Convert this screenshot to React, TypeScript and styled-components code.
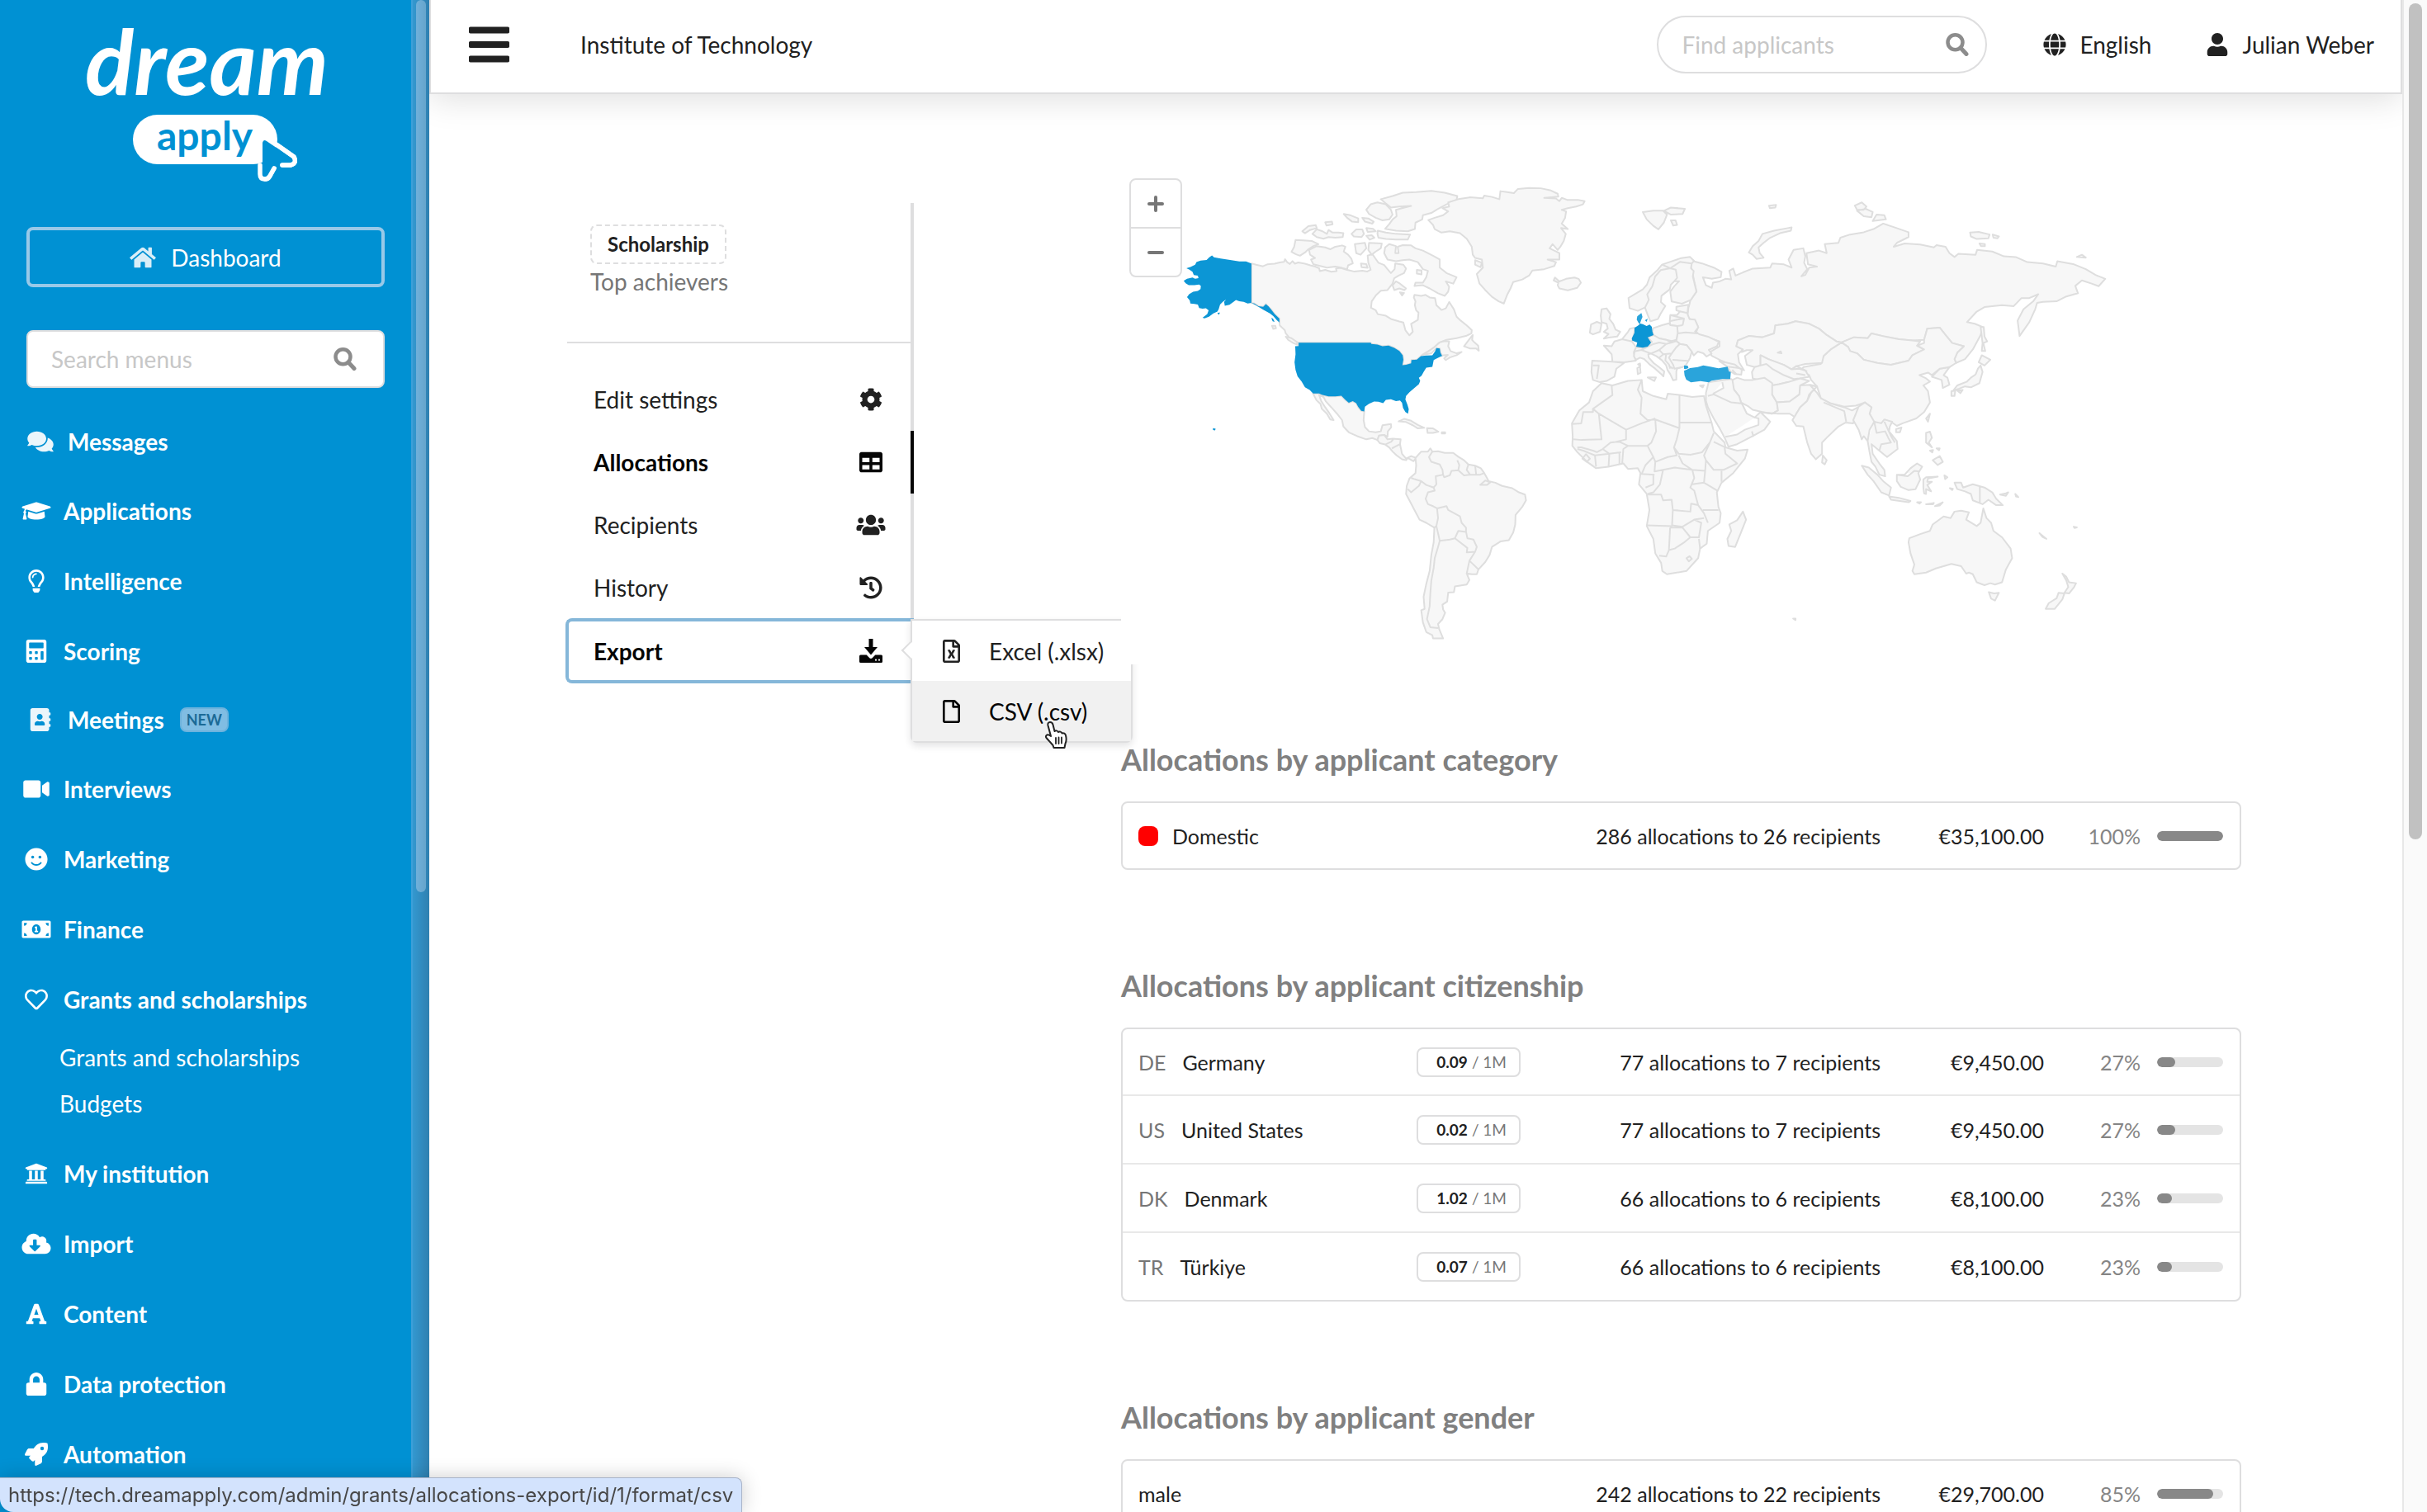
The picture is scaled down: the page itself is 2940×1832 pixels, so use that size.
import React from "react";
import styled, { createGlobalStyle, css } from "styled-components";
import {
  FaHome, FaComments, FaGraduationCap, FaRegLightbulb, FaCalculator, FaAddressBook,
  FaVideo, FaSmile, FaMoneyBillAlt, FaRegHeart, FaUniversity, FaCloudDownloadAlt, FaFont, FaLock,
  FaRocket, FaBars, FaGlobe, FaUser, FaCog, FaTable, FaUsers, FaHistory, FaRegFileExcel, FaRegFile,
} from "react-icons/fa";

const line = "#dededf";
const blue = "#0091d3";
const ink = "#212121";

const GlobalStyle = createGlobalStyle`
  *, *::before, *::after { box-sizing: border-box; }
  body { margin: 0; background: #fff; }
  body, button, input, table { font-family: Lato, "Liberation Sans", sans-serif; font-size: 28px; color: ${ink}; }
  a { color: inherit; text-decoration: none; }
  button { background: none; border: 0; padding: 0; cursor: pointer; }
  ul { list-style: none; margin: 0; padding: 0; }
`;

const Page = styled.div`
  display: grid;
  grid-template-columns: 520px minmax(0, 1fr) 30px;
  height: 100vh;
  overflow: hidden;
`;

/* ---------- sidebar ---------- */

const Sidebar = styled.aside`
  display: grid;
  grid-template-columns: minmax(0, 1fr) 22px;
  background: ${blue};
  color: #fff;
  min-height: 0;
  overflow: hidden;
`;

const SidebarBody = styled.div`
  min-height: 0;
  overflow: hidden;
`;

const SidebarTrack = styled.div`
  border-left: 2px solid #3d9fd8;
  padding: 0 4px;
  background: linear-gradient(90deg, #3398d0, #2f80b0);
`;

const SidebarThumb = styled.div`
  height: 59%;
  border-radius: 8px;
  background: linear-gradient(90deg, #70b0da, #66a5cc);
`;

const Logo = styled.a`
  display: block;
  height: 275px;
  svg { display: block; }
`;

const Dashboard = styled.a`
  display: flex;
  align-items: center;
  justify-content: center;
  gap: 18px;
  height: 73px;
  margin: 0 32px 52px;
  border: 4px solid #99c9e8;
  border-radius: 8px;
  svg { width: 32px; height: 28px; opacity: 0.85; }
`;

const SearchField = styled.label<{ $round?: boolean }>`
  display: flex;
  align-items: center;
  height: 70px;
  padding: 0 ${(p) => (p.$round ? "20px" : "32px")} 0 28px;
  border: 2px solid ${line};
  border-radius: ${(p) => (p.$round ? "35px" : "8px")};
  background: #fff;
  color: #8c8c8c;
  input {
    flex: 1;
    min-width: 0;
    border: 0;
    padding: 0;
    outline: 0;
    background: transparent;
  }
  input::placeholder { color: #c7c7c7; opacity: 1; }
  svg { width: 28px; height: 28px; }
`;

const SidebarSearch = styled.div`
  margin: 0 32px 24px;
`;

const NavLink = styled.a<{ $compact?: boolean }>`
  display: flex;
  align-items: center;
  height: ${(p) => (p.$compact ? "82px" : "85px")};
  padding-left: ${(p) => (p.$compact ? "31px" : "26px")};
  font-weight: 700;
`;

const NavIcon = styled.span<{ $soft?: boolean }>`
  display: flex;
  margin-right: 15px;
  opacity: ${(p) => (p.$soft ? 0.92 : 1)};
  svg { width: 36px; height: 28px; }
`;

const NewBadge = styled.span`
  margin-left: 19px;
  padding: 0 6px;
  border: 2px solid #6db3dd;
  border-radius: 8px;
  background: #80bde3;
  color: #1b6a96;
  font-size: 18px;
  line-height: 26px;
`;

const SubNav = styled.ul`
  margin-bottom: 14px;
`;

const SubLink = styled.a`
  display: block;
  padding-left: 72px;
  line-height: 56px;
`;

/* ---------- top bar ---------- */

const Main = styled.div`
  min-width: 0;
  min-height: 0;
  overflow: hidden;
`;

const TopBar = styled.header`
  display: flex;
  align-items: center;
  height: 114px;
  padding: 0 32px 4px 46px;
  border: solid ${line};
  border-width: 0 2px 2px;
  background: #fff;
  box-shadow: 0 6px 40px rgba(0, 0, 0, 0.13);
`;

const MenuButton = styled.button`
  display: flex;
  margin-right: 86px;
  svg { width: 49px; height: 56px; }
`;

const Institution = styled.span`
  flex: 1;
`;

const ApplicantSearch = styled.div`
  width: 400px;
  margin-right: 68px;
`;

const TopButton = styled.button`
  display: flex;
  align-items: center;
  gap: 16px;
  svg { width: 28px; height: 28px; }
  & + & { margin-left: 66px; }
`;

/* ---------- content ---------- */

const Content = styled.div`
  display: flex;
  align-items: flex-start;
  gap: 251px;
  padding: 76px 195px 0 167px;
`;

const SideMenu = styled.nav`
  position: relative;
  z-index: 1;
  flex: none;
  width: 420px;
  margin-top: 56px;
`;

const Intro = styled.div`
  border-right: 4px solid ${line};
  padding-bottom: 30px;
`;

const IntroText = styled.div`
  padding: 26px 28px 52px;
  border-bottom: 2px solid ${line};
`;

const TypeLabel = styled.span`
  display: inline-block;
  padding: 0 19px;
  border: 2px dashed ${line};
  border-radius: 8px;
  font-size: 24px;
  font-weight: 700;
  line-height: 44px;
  vertical-align: top;
`;

const GrantName = styled.div`
  color: #767676;
  line-height: 42px;
`;

const SideLink = styled.a<{ $active?: boolean }>`
  display: flex;
  align-items: center;
  justify-content: space-between;
  height: 76px;
  padding: 0 30px 0 32px;
  border-right: 4px solid ${(p) => (p.$active ? "#050505" : line)};
  color: ${(p) => (p.$active ? "#050505" : ink)};
  font-weight: ${(p) => (p.$active ? 700 : 400)};
`;

const SideIcon = styled.span`
  display: flex;
  svg { width: 36px; height: 28px; }
`;

const ExportItem = styled.div`
  position: relative;
  margin: -1px 0 0 -2px;
`;

const ExportButton = styled.button`
  display: flex;
  align-items: center;
  justify-content: space-between;
  width: 100%;
  height: 79px;
  padding: 0 34px 0 30px;
  border: 4px solid #85b7d9;
  border-right: 0;
  border-radius: 8px 0 0 8px;
  color: #050505;
  font-weight: 700;
  ${SideIcon} svg { height: 30px; }
`;

const Flyout = styled.ul`
  position: absolute;
  top: 1px;
  left: 418px;
  width: 269px;
  border: 2px solid ${line};
  border-radius: 0 0 8px 8px;
  background: #fff;
  box-shadow: 0 4px 8px rgba(34, 36, 38, 0.12);
  &::before {
    content: "";
    position: absolute;
    top: 28px;
    left: -10px;
    width: 16px;
    height: 16px;
    border: solid ${line};
    border-width: 0 0 2px 2px;
    background: #fff;
    transform: rotate(45deg);
  }
`;

const FlyoutLink = styled.a<{ $hover?: boolean }>`
  position: relative;
  display: flex;
  align-items: center;
  gap: 35px;
  height: 73px;
  padding-left: 37px;
  ${(p) => p.$hover && css`background: #f1f1f1; color: #050505;`}
  > svg:first-child { width: 21px; height: 28px; }
`;

const Pointer = styled.svg`
  position: absolute;
  left: 157px;
  top: 48px;
`;

const Results = styled.main`
  position: relative;
  flex: 1;
  min-width: 0;
`;

const MapPanel = styled.div`
  position: relative;
  z-index: 2;
  margin-bottom: 93px;
  background: #fff;
  > svg { display: block; width: 100%; }
`;

const ZoomControl = styled.div`
  position: absolute;
  top: 26px;
  left: 10px;
  border: 2px solid ${line};
  border-radius: 8px;
  background: #fff;
`;

const ZoomButton = styled.button`
  display: flex;
  align-items: center;
  justify-content: center;
  width: 60px;
  height: 57px;
  & + & { border-top: 2px solid ${line}; height: 59px; }
`;

const Section = styled.section`
  margin-bottom: 118px;
`;

const Heading = styled.h2`
  margin: 0 0 29px;
  color: #808080;
  font-size: 36px;
  line-height: 44px;
`;

const Table = styled.table`
  width: 100%;
  table-layout: fixed;
  border: 2px solid ${line};
  border-radius: 8px;
  border-collapse: separate;
  border-spacing: 0;
  font-size: 25px;
  td { height: 79px; padding: 0; white-space: nowrap; }
  tr + tr td { border-top: 2px solid #e8e8e8; height: 83px; }
`;

const NameCol = styled.col``;
const RatioCol = styled.col`width: 160px;`;
const TextCol = styled.col`width: 402px;`;
const AmountCol = styled.col`width: 198px;`;
const ShareCol = styled.col`width: 237px;`;

const Cell = styled.div<{ $end?: boolean; $pad?: string }>`
  display: flex;
  align-items: center;
  justify-content: ${(p) => (p.$end ? "flex-end" : "flex-start")};
  gap: 20px;
  padding: ${(p) => p.$pad || "0"};
`;

const Code = styled.span`
  color: #767676;
`;

const Swatch = styled.span`
  width: 24px;
  height: 24px;
  margin-right: -3px;
  border-radius: 8px;
  background: #f00;
`;

const Ratio = styled.span`
  display: inline-flex;
  align-items: center;
  justify-content: flex-end;
  gap: 5px;
  width: 126px;
  height: 36px;
  padding-right: 15px;
  border: 2px solid ${line};
  border-radius: 8px;
  color: #767676;
  font-size: 19px;
  vertical-align: middle;
  b { color: ${ink}; }
`;

const Percent = styled.span`
  color: #858585;
`;

const Bar = styled.span`
  width: 80px;
  height: 12px;
  border-radius: 6px;
  background: #e4e4e4;
  overflow: hidden;
`;

const BarFill = styled.span`
  display: block;
  height: 100%;
  border-radius: 6px;
  background: #888;
`;

const PageTrack = styled.div`
  border-left: 2px solid #e8e8e8;
  padding: 4px 6px;
  background: #fafafa;
`;

const PageThumb = styled.div`
  width: 16px;
  height: 1013px;
  max-height: 100%;
  border-radius: 8px;
  background: #c1c1c1;
`;

const StatusBar = styled.div`
  position: fixed;
  left: 0;
  bottom: 0;
  z-index: 5;
  padding: 0 10px;
  border: solid #a9b4c8;
  border-width: 1px 1px 0 0;
  border-radius: 0 8px 0 16px;
  background: #d3e3fd;
  color: #474747;
  font-family: Inter, sans-serif;
  font-size: 24px;
  line-height: 41px;
  box-shadow: 0 0 24px rgba(0, 0, 0, 0.2);
`;

/* ---------- data ---------- */

type NavEntry = { label: string; icon: React.ReactNode; compact?: boolean; badge?: string; children?: string[] };

const nav: NavEntry[] = [
  { label: "Messages", icon: <FaComments />, compact: true },
  { label: "Applications", icon: <FaGraduationCap /> },
  { label: "Intelligence", icon: <FaRegLightbulb /> },
  { label: "Scoring", icon: <FaCalculator /> },
  { label: "Meetings", icon: <FaAddressBook />, compact: true, badge: "NEW" },
  { label: "Interviews", icon: <FaVideo /> },
  { label: "Marketing", icon: <FaSmile /> },
  { label: "Finance", icon: <FaMoneyBillAlt /> },
  { label: "Grants and scholarships", icon: <FaRegHeart />, children: ["Grants and scholarships", "Budgets"] },
  { label: "My institution", icon: <FaUniversity /> },
  { label: "Import", icon: <FaCloudDownloadAlt /> },
  { label: "Content", icon: <FaFont /> },
  { label: "Data protection", icon: <FaLock /> },
  { label: "Automation", icon: <FaRocket /> },
];

type Row = { code?: string; swatch?: boolean; name: string; ratio?: string; text: string; amount: string; share: number };

const sections: { title: string; rows: Row[] }[] = [
  {
    title: "Allocations by applicant category",
    rows: [{ swatch: true, name: "Domestic", text: "286 allocations to 26 recipients", amount: "€35,100.00", share: 100 }],
  },
  {
    title: "Allocations by applicant citizenship",
    rows: [
      { code: "DE", name: "Germany", ratio: "0.09", text: "77 allocations to 7 recipients", amount: "€9,450.00", share: 27 },
      { code: "US", name: "United States", ratio: "0.02", text: "77 allocations to 7 recipients", amount: "€9,450.00", share: 27 },
      { code: "DK", name: "Denmark", ratio: "1.02", text: "66 allocations to 6 recipients", amount: "€8,100.00", share: 23 },
      { code: "TR", name: "Türkiye", ratio: "0.07", text: "66 allocations to 6 recipients", amount: "€8,100.00", share: 23 },
    ],
  },
  {
    title: "Allocations by applicant gender",
    rows: [{ name: "male", text: "242 allocations to 22 recipients", amount: "€29,700.00", share: 85 }],
  },
];

/* ---------- drawings ---------- */

const LogoMark = () => (
  <svg width="498" height="230" viewBox="0 0 498 230" role="img" aria-label="dream apply">
    <text x="103" y="115" fill="#fff" fontFamily="Lato, sans-serif" fontSize="110" fontWeight="700" fontStyle="italic">dream</text>
    <rect x="161" y="139" width="175" height="60" rx="30" fill="#fff" />
    <path d="M315 200 L315 211 Q315 217 321 217 Q325 217 327 213 L332 204 M342 200 L352 200 Q360 198 356 190 L322 166" fill="none" stroke="#fff" strokeWidth="5.5" strokeLinecap="round" strokeLinejoin="round" />
    <path d="M318 212 V173 Q319 168 323 171 L354 192 Q357 196 352 197.500 L340 197.500 Q336 198 334 201 L325 213 Q320 216 318 212Z" fill={blue} />
    <path d="M332 204 L327 213 Q325 217 321 217" fill="none" stroke="#fff" strokeWidth="5.5" strokeLinecap="round" />
    <path d="M342 200 L352 200 Q360 198 356 190 L336 176" fill="none" stroke="#fff" strokeWidth="5.5" strokeLinecap="round" strokeLinejoin="round" />
    <text x="190" y="182" fill={blue} fontFamily="Lato, sans-serif" fontSize="48" fontWeight="700">apply</text>
  </svg>
);

const SearchIcon = () => (
  <svg viewBox="0 0 28 28" fill="none" stroke="currentColor" aria-hidden="true">
    <circle cx="11.500" cy="11.300" r="9" strokeWidth="4.500" />
    <path d="M18 18l7 7.500" strokeWidth="5" strokeLinecap="round" />
  </svg>
);

const DownloadIcon = () => (
  <svg viewBox="0 0 28 30" fill="currentColor">
    <path d="M11.500 0h5v10h5.500L14 19.500 6 10h5.500z" />
    <path d="M1.500 19.500h7.200l3.600 3.800q1.700 1.500 3.400 0l3.600-3.800h7.200q1.500 0 1.500 1.500v6.500q0 1.500-1.500 1.500h-25q-1.500 0-1.500-1.500V21q0-1.500 1.500-1.500z" />
    <circle cx="20" cy="25.700" r="1.100" fill="#fff" />
    <circle cx="24" cy="25.700" r="1.100" fill="#fff" />
  </svg>
);

const americas = [
  // Canada and the Arctic islands
  "M431,332 445,336 465,341 478,335 500,333 515,329 528,327 531,319 537,328 545,334 553,325 560,333 570,329 590,333 606,338 620,342 632,347 634,356 650,352 668,358 684,356 682,348 695,346 715,352 735,357 760,355 775,357 785,352 782,342 778,330 776,308 790,303 800,318 808,330 825,337 835,350 845,362 856,350 858,332 882,336 890,348 884,362 868,370 855,378 850,395 835,415 815,417 800,432 788,450 786,470 800,478 806,490 830,495 845,505 870,513 882,516 888,540 900,556 910,545 905,520 925,508 927,485 920,478 916,462 918,450 913,438 915,430 935,433 948,430 960,438 976,440 980,462 995,477 1008,472 1018,452 1032,475 1040,498 1052,510 1070,525 1085,540 1084,550 1070,557 1040,565 1010,570 990,578 975,592 960,603 940,615 934,621 922,632 906,633 905,643 890,648 879,649 882,632 880,618 870,605 855,595 838,588 820,590 805,585 787,583 785,579 571,579 560,575 545,565 533,550 530,540 515,525 514,504 500,490 490,476 474,459 466,467 452,465 440,457 431,455Z",
  "M990,578 1005,574 1018,575 1015,590 1022,605 1040,612 1055,608 1040,618 1020,625 1008,633 1003,628 1014,617 1000,618 997,620 992,610 990,597 980,596 965,612 940,617 962,602 975,592Z",
  "M1088,555 1080,565 1062,590 1080,597 1098,597 1106,604 1104,588 1090,575 1086,570Z",
  "M533,560 550,565 565,576 570,586 555,580 540,570Z M492,526 l10,0 2,8 -8,2z",
  "M562,259 585,260 610,262 630,272 615,278 600,288 590,298 575,308 562,303 550,296 558,280Z",
  "M602,290 625,278 650,282 665,288 680,280 700,276 710,280 705,295 718,305 728,318 732,332 718,338 715,350 700,346 680,342 655,345 635,340 615,335 608,320 620,315 605,305Z",
  "M582,232 600,216 622,213 625,222 605,228 590,238Z",
  "M612,240 625,226 642,232 655,240 660,228 672,236 690,236 704,238 702,250 680,252 660,250 645,255 625,250Z",
  "M650,204 l20,-2 2,8 -18,4z M705,178 725,182 748,192 748,204 730,202 715,190Z M728,240 742,226 760,226 765,240 758,250 735,248Z M760,190 778,192 794,202 790,208 768,202Z",
  "M772,165 785,148 805,142 830,148 845,165 850,180 840,195 820,198 800,190 780,178Z",
  "M815,132 850,122 880,112 920,110 965,106 1005,112 1042,122 1040,135 1010,148 985,162 965,175 940,182 938,195 918,205 916,225 895,232 860,230 828,224 840,210 850,195 862,185 860,165 885,158 905,153 870,155 845,158 830,145Z",
  "M806,230 830,236 860,240 902,242 895,258 860,258 830,256 808,252 805,240Z M772,222 l20,2 8,8 -24,2z M772,246 l16,-2 8,8 -14,6z",
  "M738,272 768,268 772,285 755,305 742,300Z M780,268 818,270 815,285 800,295 788,305 778,290Z M756,332 l16,2 4,12 -18,-2z",
  "M825,300 828,282 840,272 860,278 858,300 868,300 865,280 880,275 905,276 918,285 940,292 970,308 990,320 990,345 1010,362 1040,375 1030,395 1008,388 1018,405 1015,420 1005,433 985,425 960,410 940,400 915,402 918,392 940,392 950,375 955,355 940,350 925,328 900,320 880,322 860,325 835,320Z",
  "M850,400 860,388 872,395 890,410 885,415 870,410 855,415Z M872,422 l12,2 -6,8z M922,352 l14,2 0,12 -14,-2z",
  // Greenland, Iceland
  "M956,197 975,190 1000,182 1015,170 998,160 1018,155 1015,142 1045,132 1080,126 1118,129 1122,121 1145,125 1167,132 1170,107 1190,110 1210,113 1222,100 1255,97 1290,98 1320,105 1340,115 1342,124 1300,128 1335,130 1345,138 1352,128 1368,134 1400,134 1420,138 1415,148 1395,155 1370,160 1352,165 1365,170 1362,190 1352,208 1370,225 1350,222 1364,240 1358,262 1348,280 1340,290 1325,272 1316,285 1345,300 1345,320 1310,320 1335,328 1330,340 1300,350 1265,354 1255,370 1235,382 1208,390 1200,410 1190,430 1180,457 1165,450 1145,436 1125,415 1108,395 1100,365 1118,345 1115,320 1095,315 1088,305 1085,280 1070,255 1050,238 1020,232 995,236 975,225 970,212Z",
  "M1095,322 l20,8 -4,14 -16,-8z",
  "M1328,385 1332,376 1345,388 1365,380 1390,376 1402,380 1409,392 1398,408 1370,416 1345,410 1340,400 1342,392Z",
  // Mexico, Central America, Caribbean
  "M614,737 632,737 640,741 660,746 680,746 698,744 710,757 720,766 732,761 742,767 748,779 757,791 766,793 764,820 768,842 780,855 800,858 815,855 820,836 845,832 846,842 836,855 835,872 825,866 810,868 805,882 790,876 772,880 745,870 720,858 704,840 700,820 685,800 668,780 652,762 645,748 632,742 638,760 650,780 662,798 675,820 665,818 655,800 640,785 636,770 624,758Z",
  "M805,882 810,868 825,866 835,880 850,878 874,880 872,895 875,910 878,925 890,940 905,932 920,938 912,948 895,938 890,945 878,942 862,930 850,918 840,905 828,896 812,892Z M828,896 845,888 852,880 M848,908 872,895",
  "M868,824 885,816 905,822 925,835 944,844 925,846 910,836 890,826Z M952,845 970,846 986,856 970,860 954,860Z M996,858 h10 v4 h-10z",
  // South America
  "M918,938 935,918 955,918 962,908 968,918 985,917 1005,922 1030,922 1045,934 1062,945 1075,958 1095,962 1112,970 1122,985 1130,1000 1135,1010 1155,1015 1175,1025 1205,1032 1225,1045 1243,1052 1246,1070 1235,1090 1215,1115 1214,1145 1208,1170 1195,1194 1170,1198 1145,1215 1138,1240 1125,1262 1105,1285 1100,1300 1085,1300 1070,1298 1078,1318 1070,1332 1035,1338 1032,1356 1015,1357 1012,1385 998,1395 1000,1410 1006,1420 998,1440 985,1455 988,1470 1000,1500 970,1500 968,1490 950,1480 940,1450 935,1412 945,1408 942,1370 950,1330 960,1290 965,1240 972,1200 974,1155 950,1140 930,1130 915,1100 900,1070 890,1050 892,1025 900,1002 918,985 920,960Z",
];

const americasBorders =
  "M974,1155 980,1150 990,1196 985,1215 975,1250 972,1280 965,1320 962,1360 960,1400 952,1440 962,1465 985,1468 M905,1000 915,1004 935,1010 928,1025 905,1045 895,1035 M935,1010 950,1022 972,1030 975,1040 955,1045 948,1065 955,1082 970,1088 982,1095 985,1125 980,1150 M968,918 958,935 965,950 990,958 998,975 1000,990 978,995 980,1020 972,1030 M1000,990 1003,998 1020,992 1025,978 1045,976 1048,960 1042,945 M1045,976 1062,992 1080,990 1110,990 1122,985 M1075,958 1070,975 1080,990 M1095,962 1098,990 M1110,1022 1125,1008 1140,1014 1130,1022Z M982,1095 1010,1088 1015,1100 1050,1120 1055,1140 1068,1155 1068,1168 1045,1165 1035,1188 1020,1192 990,1196 M1068,1168 1072,1188 1090,1192 1100,1215 1095,1230 1070,1232 1072,1218 1035,1188 M1095,1230 1078,1258 1070,1298 M1078,1258 1105,1285";

const usa =
  "M314,307 320,313 340,317 368,321 395,326 415,326 431,332 431,455 420,457 408,452 395,450 385,446 378,452 366,461 352,464 350,452 356,444 346,452 338,460 334,474 330,482 318,488 305,498 292,503 286,501 300,490 304,478 296,472 286,473 276,471 272,460 262,458 250,457 248,447 240,437 246,428 258,420 272,418 280,412 281,402 276,398 262,400 245,400 236,394 230,386 240,380 256,376 264,380 274,378 272,370 260,368 256,358 246,351 238,347 250,343 264,336 268,328 280,323 298,321 306,313Z M431,455 440,457 452,465 466,467 474,459 482,466 490,476 500,490 514,504 514,516 506,508 496,496 486,488 476,482 466,476 456,470 444,462Z M490,502 l5,2 5,10 -6,-2z M330,486 l8,-1 -4,7z M317,845 l8,2 -2,5 -6,-1z M571,579 785,579 787,583 805,585 820,590 838,588 855,595 870,605 880,618 882,632 879,649 890,648 905,643 906,633 922,632 934,621 950,619 968,618 976,606 980,596 990,597 992,610 997,620 985,626 972,633 970,644 968,654 950,657 942,670 936,682 928,688 932,698 928,708 915,720 900,733 890,745 888,756 894,772 898,786 896,800 888,795 881,782 878,766 872,759 860,761 845,755 830,757 822,767 808,763 795,762 780,769 768,778 766,793 757,791 748,779 742,767 732,761 720,766 710,757 698,744 680,746 660,746 640,741 632,737 614,737 604,726 590,718 580,700 568,684 562,664 559,640 562,615 561,590 571,589Z";

const oldWorld = [
  // Arctic islands
  "M318,172 345,168 370,168 380,180 372,205 358,226 345,215 328,195Z M372,168 390,158 426,162 420,178 390,180Z M390,198 l12,0 4,14 -10,2z M642,152 l18,-2 -2,8 -14,2z",
  "M590,298 600,278 615,262 625,240 655,230 690,222 700,220 698,230 670,238 645,252 628,268 615,282 618,300 628,314 610,318 600,305Z",
  "M862,152 880,142 892,155 885,165 868,165Z M868,168 890,162 908,172 905,188 885,185Z M908,200 918,180 938,182 942,195Z M1158,236 1180,234 1208,242 1205,254 1175,256 1160,248Z M1216,242 l16,6 -4,6 -10,-2z M1182,270 l14,2 0,6 -10,0z M1432,312 1445,305 1455,314Z",
  // British Isles
  "M212,475 225,472 235,490 232,505 242,520 248,538 260,545 252,560 235,562 218,566 230,552 218,545 228,535 225,520 212,515 210,495Z M182,548 185,522 200,514 212,520 208,545 190,553Z",
  // Russia
  "M448,325 470,332 500,345 520,358 518,375 495,380 472,375 480,400 495,408 498,392 515,388 530,380 545,382 540,355 550,348 556,370 575,360 600,348 645,345 650,332 680,335 700,345 692,320 705,290 730,285 735,310 732,330 740,350 725,372 735,368 745,345 765,342 742,335 738,300 770,292 790,300 785,272 820,268 825,252 850,242 885,235 910,225 935,208 965,220 1000,235 1000,250 970,268 962,280 990,270 1030,273 1065,282 1072,275 1095,280 1105,300 1118,312 1128,302 1172,305 1176,290 1215,295 1245,310 1275,312 1305,328 1345,332 1378,342 1382,325 1425,335 1455,350 1480,368 1505,380 1488,403 1470,395 1445,385 1428,402 1435,425 1405,435 1380,450 1345,452 1330,455 1325,475 1310,515 1285,558 1280,510 1295,475 1320,450 1333,428 1310,440 1290,440 1270,465 1240,462 1195,468 1175,482 1150,515 1170,520 1190,530 1185,555 1165,600 1145,630 1122,642 1118,630 1125,610 1142,590 1112,580 1095,555 1080,532 1048,535 1040,570 1010,572 975,568 940,560 905,550 895,565 860,562 828,578 815,575 790,555 770,535 745,520 710,512 690,520 658,525 655,550 625,562 590,558 562,572 558,590 575,600 562,615 565,640 578,665 560,655 548,650 520,635 495,620 490,608 515,590 515,575 490,565 465,560 455,545 460,530 452,510 432,502 435,470 438,458 440,445 456,420 450,388 445,358 440,335Z",
  "M1185,530 1193,530 1195,560 1202,575 1192,580 1197,605 1188,605 1190,580Z",
  // Japan and Korea
  "M1180,640 1188,618 1210,632 1195,650Z M1185,650 1190,670 1182,705 1160,718 1145,715 1130,722 1115,728 1125,712 1150,700 1160,688 1172,678 1178,660Z M1110,730 1120,728 1118,745 1110,745Z M1125,728 l14,-2 -6,10z",
  "M1060,685 1080,660 1105,655 1090,680 1100,688 1105,710 1088,720 1085,695Z",
  // Central and East Asia
  "M828,578 860,562 895,565 905,550 940,560 975,568 1010,572 1030,575 1022,588 1040,600 1010,618 1000,635 955,648 920,642 885,632 868,612 850,605 845,592Z",
  "M828,578 845,592 850,605 868,612 885,632 920,642 955,648 1000,635 1010,618 1040,600 1022,588 1040,580 1040,570 1048,535 1080,532 1095,555 1112,580 1142,590 1125,610 1118,630 1122,642 1105,655 1080,660 1060,680 1050,672 1028,680 1045,690 1055,700 1038,712 1050,730 1055,765 1040,795 1020,815 985,830 970,838 955,825 938,825 925,832 910,825 900,800 905,780 888,765 865,775 835,778 800,768 775,752 765,715 750,695 745,680 722,668 730,655 775,645 782,620 800,600Z",
  "M558,590 562,572 590,558 625,562 655,550 658,525 690,520 710,512 745,520 770,535 790,555 815,575 828,578 800,600 782,620 778,642 735,645 712,652 700,662 680,648 640,630 620,618 620,650 605,655 585,648 580,620 600,602 585,602 572,608 575,600Z M664,610 l8,-4 2,6z",
  "M605,655 620,650 635,645 650,660 680,680 705,692 712,700 690,702 668,708 650,712 630,700 600,690 598,670Z M620,650 620,618 640,630 680,648 700,662 712,652 735,665 745,685 722,690 705,692 680,680 650,660 635,645Z M700,662 720,660 740,668 M712,675 735,680",
  "M548,695 560,688 578,695 600,695 630,688 650,705 652,730 650,740 662,765 665,790 650,800 625,795 600,788 590,778 570,765 565,745 552,725 545,705Z",
  "M650,712 668,708 690,702 722,690 745,698 722,712 720,740 695,762 662,765 650,740Z",
  "M662,765 695,762 720,740 722,712 748,710 765,715 745,740 740,760 722,780 712,800 710,812 695,800 665,800 625,796 650,800 665,790Z",
  "M765,715 748,712 765,735 775,752 800,768 835,780 855,790 888,768 890,780 865,810 858,830 838,828 820,840 790,875 778,890 778,925 762,942 750,925 740,890 730,840 712,838 702,820 712,800 722,780 740,760 750,735Z M782,765 835,792 840,825",
  "M780,930 790,945 785,958 778,952Z",
  // South-east Asia
  "M888,765 905,780 900,800 912,825 930,830 938,818 958,825 952,840 950,855 970,885 972,910 945,935 930,920 905,895 908,925 925,955 938,975 940,995 925,990 915,965 905,950 900,920 895,885 885,870 880,880 872,850 858,820 865,800 872,778Z M912,825 900,850 895,885 M912,825 918,860 940,855 948,875 955,890 930,895 925,915 M938,825 955,870 965,890",
  "M968,848 982,843 978,858 968,858Z M1045,815 1055,800 1050,825Z M1045,860 1055,856 1060,875 1052,890 1060,905 1045,890Z M1062,945 1080,932 1088,950 1075,960Z M1055,915 l8,-2 -2,8z M1072,908 l8,0 -2,6z",
  "M880,962 898,968 920,990 935,1010 955,1030 950,1055 930,1045 910,1010 895,990Z M950,1058 975,1062 1005,1072 1000,1076 955,1068Z M970,990 990,990 1005,970 1022,955 1035,965 1025,985 1030,1005 1018,1035 1000,1038 980,1028 970,1010Z M970,990 998,995 1015,978 1028,980",
  "M1038,1005 1045,998 1075,996 1050,1002 1048,1012 1060,1012 1048,1022 1058,1042 1045,1035 1045,1050 1040,1048 1038,1030Z M1022,1076 l10,0 -4,4z M1045,1082 l20,-4 -2,4z M1068,1088 l20,-12 -8,10z M1092,992 l8,6 -6,6z M1106,1032 l8,2 -2,4z",
  "M1118,1015 1135,1015 1140,1030 1165,1020 1195,1030 1215,1045 1225,1065 1242,1085 1225,1085 1205,1068 1190,1082 1165,1070 1160,1050 1145,1042 1125,1035Z M1183,1028 1183,1080 M1235,1052 1250,1048 1256,1045 1250,1056Z M1274,1050 l8,10 -6,-2z",
  // Oceania
  "M1002,1188 1030,1175 1055,1165 1062,1145 1090,1120 1108,1125 1118,1105 1135,1102 1155,1107 1148,1130 1175,1150 1185,1140 1192,1095 1200,1125 1212,1140 1218,1165 1240,1185 1262,1220 1266,1250 1250,1285 1240,1325 1222,1332 1210,1328 1195,1334 1175,1325 1165,1300 1155,1295 1148,1298 1135,1275 1110,1268 1070,1282 1045,1295 1015,1300 1010,1290 1015,1270 1005,1235 1000,1200Z",
  "M1206,1356 1220,1360 1232,1358 1222,1382 1212,1376Z M1395,1298 1405,1308 1412,1325 1430,1328 1425,1340 1412,1360 1400,1358 1410,1340 1405,1320Z M1385,1358 1400,1360 1395,1378 1375,1408 1352,1408 1360,1390 1380,1375Z M1336,1172 1354,1190 1344,1184Z M1424,1152 l8,2 -6,2z M704,1438 l6,0 0,5z",
  // France, Iberia, Benelux
  "M240,638 238,615 218,588 238,590 245,575 265,568 290,575 302,595 295,610 300,635 270,640Z M188,635 240,638 270,642 250,660 245,685 225,698 208,702 190,695 186,670Z M190,650 205,650 200,692 M265,568 280,545 285,535 298,532 295,555 290,575Z",
  // Middle East
  "M487,702 545,692 548,695 552,725 565,745 570,765 575,775 585,800 605,812 620,795 645,825 630,850 600,870 560,895 538,903 530,880 515,845 500,815 485,780 480,760 480,735Z M485,745 500,740 545,765 570,768 M498,738 525,720 522,702 M530,872 560,865 580,850 615,835 615,815 605,812 M598,855 602,872",
  // Africa
  "M212,705 240,712 280,698 315,695 318,730 345,745 378,755 382,738 415,742 445,748 475,745 480,775 495,830 500,855 528,890 530,905 560,915 587,912 580,940 550,985 520,1015 508,1045 512,1090 518,1110 515,1140 485,1165 482,1205 465,1220 460,1250 430,1290 380,1300 368,1290 365,1265 350,1235 345,1190 328,1150 335,1100 328,1050 308,1020 312,985 305,970 280,972 268,955 230,965 198,970 175,950 150,920 137,900 138,870 136,830 155,790 180,765 190,730Z",
  "M575,1105 583,1130 570,1170 555,1215 538,1212 535,1190 545,1165 540,1145 560,1132Z",
];

const oldWorldBorders =
  "M136,832 160,830 165,795 190,795 190,785 240,742 238,712 M190,785 205,800 212,880 160,882 140,880 M205,800 275,850 315,830 350,815 M315,695 305,725 315,750 312,800 330,820 350,818 412,845 412,742 M412,828 495,828 M275,850 275,880 248,888 235,890 215,910 200,920 190,915 160,905 150,905 M350,818 352,855 340,890 330,900 280,900 258,888 248,888 M412,845 405,880 398,905 405,930 382,935 350,950 345,935 330,900 M398,905 410,925 440,928 470,920 490,890 500,860 M500,888 530,905 M490,890 475,930 480,945 500,975 525,975 560,955 530,925 528,905 M410,930 420,955 445,975 478,978 480,945 M350,950 348,980 370,975 400,968 445,975 M345,935 325,960 315,988 348,990 M265,955 268,910 280,900 M258,958 258,922 M230,965 232,925 262,920 M198,965 195,930 232,925 M215,910 232,925 M150,910 165,915 185,925 195,930 M163,940 172,926 182,940 174,950Z M370,975 362,1020 345,1045 330,1050 M345,990 345,1020 325,1030 M330,1052 365,1052 370,1070 392,1068 395,1100 440,1105 442,1080 460,1085 450,1040 440,1030 450,1000 445,975 M478,978 475,1015 510,1040 M520,978 520,1012 M475,1015 445,1020 M472,1100 512,1100 M460,1085 475,1110 485,1140 M395,1100 393,1148 420,1152 450,1130 475,1125 M328,1148 393,1150 M388,1155 385,1225 378,1245 360,1242 M388,1155 420,1155 440,1185 425,1200 400,1220 385,1225 M440,1185 462,1185 468,1140 450,1130 M462,1190 465,1220 M430,1250 438,1244 444,1252 436,1260Z";

const europe = [
  // Norway, Sweden and Finland
  "M38,183 60,170 90,152 105,135 115,108 145,80 160,62 195,50 230,38 262,34 276,48 268,58 265,75 275,85 272,105 285,160 265,190 232,204 195,196 190,160 205,140 222,122 205,122 192,135 188,152 158,175 156,198 172,212 155,240 145,260 118,268 108,245 98,218 72,230 42,220Z",
  // Baltic states, Belarus, Ukraine, Moldova
  "M212,215 256,208 252,240 260,260 280,262 292,290 280,305 295,315 330,325 366,342 360,358 330,372 340,385 322,396 310,384 290,378 275,392 268,378 250,355 225,350 212,340 217,310 215,285 190,282 188,268 190,245 215,245 225,232 212,228Z",
  // Poland
  "M128,293 160,282 185,275 190,282 215,285 217,310 212,335 195,340 175,335 150,330 129,318 125,305Z",
  // Alps, Italy, Balkans
  "M66,362 90,364 108,360 120,345 108,326 129,318 150,330 175,335 195,345 212,340 225,350 250,355 268,378 262,400 256,412 245,430 235,434 215,440 212,450 212,480 200,482 190,460 180,445 175,428 160,410 140,395 120,385 110,388 112,400 130,420 150,435 168,450 165,468 155,458 135,440 115,425 95,405 80,400 65,408 58,395 60,375Z",
  // Caucasus and Mediterranean islands
  "M368,412 425,425 450,445 448,462 425,460 408,450 398,433Z M400,433 440,438 M415,445 430,460",
  "M70,438 80,432 82,455 72,460Z M73,424 l7,-3 1,9z M108,472 138,472 132,485Z M298,502 l14,-2 -4,8z",
];

const europeBorders =
  "M98,218 112,190 106,170 125,140 135,105 155,82 190,75 210,80 215,110 205,122 M160,62 190,75 225,52 268,58 M190,245 240,258 M188,268 215,262 240,258 235,282 M225,232 252,238 M235,282 215,285 M217,312 245,308 290,312 M56,378 85,372 108,360 130,350 150,345 175,350 195,345 M108,326 125,345 M85,372 120,385 150,372 175,350 M150,372 165,388 195,385 212,362 225,350 M165,388 150,400 M175,388 172,410 185,425 190,440 M195,385 185,400 200,425 M198,408 255,412 M200,425 205,440 235,434 M185,430 200,440";

const germany =
  "M75,282 80,276 90,278 104,285 115,280 123,288 125,305 129,318 108,326 120,345 115,352 108,360 90,364 66,360 70,345 52,338 50,330 60,310 60,292Z";
const denmark = "M76,276 68,262 70,250 85,238 89,252 84,264 80,276Z M98,264 108,258 104,270Z";
const turkey =
  "M240,448 262,438 290,434 310,428 335,433 365,439 398,433 403,450 410,452 408,478 380,478 340,484 330,490 300,485 265,490 248,480 242,465Z M240,428 254,430 256,438 245,442 240,440Z";

const Land = styled.path`
  fill: #f7f7f7;
  stroke: #dedede;
  stroke-width: 2px;
  stroke-linejoin: round;
  vector-effect: non-scaling-stroke;
`;

const Border = styled(Land)`
  fill: none;
`;

const WorldMap = () => (
  <svg viewBox="1358 190 1357 615" role="img" aria-label="World map of allocations">
    <g transform="translate(1340 190) scale(0.40816 0.38903)">
      {americas.map((d) => <Land key={d} d={d} />)}
      <Border d={americasBorders} />
      <path d={usa} fill="#0c96d5" />
    </g>
    <g transform="translate(1840 190) scale(0.47194 0.38903)">
      {oldWorld.map((d) => <Land key={d} d={d} />)}
      <Border d={oldWorldBorders} />
    </g>
    <g transform="translate(1960 300) scale(0.33333)">
      {europe.map((d) => <Land key={d} d={d} />)}
      <Border d={europeBorders} />
      <path d={germany} fill="#0c96d5" />
      <path d={denmark} fill="#2aa4db" />
      <path d={turkey} fill="#2aa4db" />
    </g>
  </svg>
);

const HandPointer = () => (
  <Pointer width="34" height="36" viewBox="0 0 34 36" aria-hidden="true">
    <path d="M10 2c2 0 3 1 3.500 3l2 8c1-1 3.500-1 4.500 1 1.500-1 3.800-.5 4.500 1.500 2-.8 4 .5 4.500 2.500 1 4 1 7-.5 10l-1 5H14.500l-1-3-8-9c-1.500-2 .5-4.500 3-3.500l2.500 1.500L7.500 6C7 3.500 8 2 10 2z" fill="#fff" stroke="#222" strokeWidth="2" strokeLinejoin="round" />
    <path d="M17 21v7M20.500 20.500v7.500M24 20.500v7" stroke="#222" strokeWidth="1.800" strokeLinecap="round" />
  </Pointer>
);

/* ---------- page ---------- */

const AllocationTable = ({ title, rows }: { title: string; rows: Row[] }) => (
  <Section>
    <Heading>{title}</Heading>
    <Table aria-label={title}>
      <colgroup>
        <NameCol />
        <RatioCol />
        <TextCol />
        <AmountCol />
        <ShareCol />
      </colgroup>
      <tbody>
        {rows.map((row) => (
          <tr key={row.name}>
            <td>
              <Cell $pad="0 0 0 19px">
                {row.swatch && <Swatch />}
                {row.code && <Code>{row.code}</Code>}
                <span>{row.name}</span>
              </Cell>
            </td>
            <td>{row.ratio && <Ratio><b>{row.ratio}</b> / 1M</Ratio>}</td>
            <td><Cell $end>{row.text}</Cell></td>
            <td><Cell $end>{row.amount}</Cell></td>
            <td>
              <Cell $end $pad="0 20px 0 0">
                <Percent>{row.share}%</Percent>
                <Bar><BarFill style={{ width: `${row.share}%` }} /></Bar>
              </Cell>
            </td>
          </tr>
        ))}
      </tbody>
    </Table>
  </Section>
);

export default function App() {
  return (
    <>
      <GlobalStyle />
      <Page>
        <Sidebar>
          <SidebarBody>
            <Logo href="#"><LogoMark /></Logo>
            <Dashboard href="#"><FaHome /> Dashboard</Dashboard>
            <SidebarSearch>
              <SearchField>
                <input type="text" placeholder="Search menus" aria-label="Search menus" />
                <SearchIcon />
              </SearchField>
            </SidebarSearch>
            <nav>
              <ul>
                {nav.map((item) => (
                  <li key={item.label}>
                    <NavLink href="#" $compact={item.compact}>
                      <NavIcon $soft={item.compact}>{item.icon}</NavIcon>
                      {item.label}
                      {item.badge && <NewBadge>{item.badge}</NewBadge>}
                    </NavLink>
                    {item.children && (
                      <SubNav>
                        {item.children.map((child) => (
                          <li key={child}><SubLink href="#">{child}</SubLink></li>
                        ))}
                      </SubNav>
                    )}
                  </li>
                ))}
              </ul>
            </nav>
          </SidebarBody>
          <SidebarTrack><SidebarThumb /></SidebarTrack>
        </Sidebar>

        <Main>
          <TopBar>
            <MenuButton type="button" aria-label="Toggle menu"><FaBars /></MenuButton>
            <Institution>Institute of Technology</Institution>
            <ApplicantSearch>
              <SearchField $round>
                <input type="text" placeholder="Find applicants" aria-label="Find applicants" />
                <SearchIcon />
              </SearchField>
            </ApplicantSearch>
            <TopButton type="button"><FaGlobe /> English</TopButton>
            <TopButton type="button"><FaUser /> Julian Weber</TopButton>
          </TopBar>

          <Content>
            <SideMenu>
              <Intro>
                <IntroText>
                  <TypeLabel>Scholarship</TypeLabel>
                  <GrantName>Top achievers</GrantName>
                </IntroText>
              </Intro>
              <SideLink href="#">Edit settings <SideIcon><FaCog /></SideIcon></SideLink>
              <SideLink href="#" $active>Allocations <SideIcon><FaTable /></SideIcon></SideLink>
              <SideLink href="#">Recipients <SideIcon><FaUsers /></SideIcon></SideLink>
              <SideLink href="#">History <SideIcon><FaHistory /></SideIcon></SideLink>
              <ExportItem>
                <ExportButton type="button">Export <SideIcon><DownloadIcon /></SideIcon></ExportButton>
                <Flyout>
                  <li><FlyoutLink href="#"><FaRegFileExcel /> Excel (.xlsx)</FlyoutLink></li>
                  <li><FlyoutLink href="#" $hover><FaRegFile /> CSV (.csv)<HandPointer /></FlyoutLink></li>
                </Flyout>
              </ExportItem>
            </SideMenu>

            <Results>
              <MapPanel>
                <WorldMap />
                <ZoomControl>
                  <ZoomButton type="button" aria-label="Zoom in">
                    <svg width="20" height="20" viewBox="0 0 20 20"><path d="M10 2v16M2 10h16" stroke="#767676" strokeWidth="4" strokeLinecap="round" /></svg>
                  </ZoomButton>
                  <ZoomButton type="button" aria-label="Zoom out">
                    <svg width="20" height="20" viewBox="0 0 20 20"><path d="M2 10h16" stroke="#767676" strokeWidth="4" strokeLinecap="round" /></svg>
                  </ZoomButton>
                </ZoomControl>
              </MapPanel>
              {sections.map((s) => <AllocationTable key={s.title} {...s} />)}
            </Results>
          </Content>
        </Main>

        <PageTrack><PageThumb /></PageTrack>
      </Page>
      <StatusBar>https://tech.dreamapply.com/admin/grants/allocations-export/id/1/format/csv</StatusBar>
    </>
  );
}
